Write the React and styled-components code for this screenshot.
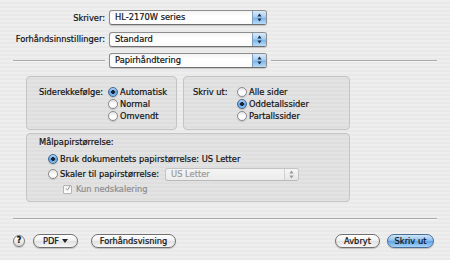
import React from 'react'
import styled, { createGlobalStyle } from 'styled-components'

const GlobalStyle = createGlobalStyle`
  html, body {
    margin:0;
    padding:0;
    background:#ececec;
  }
  body{
    font-family:"DejaVu Sans", "Liberation Sans", sans-serif;
    font-size:8.3px;
    color:#111;
    -webkit-text-stroke:0.2px currentColor;
  }
`

const Arrows = ({ color = '#1d2f4a' }) => (
  <svg width="5" height="9" viewBox="0 0 5 9">
    <path d="M2.5 0.5 L4.6 3.4 L0.4 3.4 Z" fill={color} />
    <path d="M2.5 8.5 L4.6 5.6 L0.4 5.6 Z" fill={color} />
  </svg>
)

const PopUp = ({ value, disabled }) => (
  <Select disabled={disabled}>
    <SelectText>{value}</SelectText>
    <Stepper disabled={disabled}>
      <Arrows color={disabled ? '#9a9a9a' : '#1d2f4a'} />
    </Stepper>
  </Select>
)

const Option = ({ checked, children }) => (
  <OptionRow>
    <Radio checked={checked} />
    <span>{children}</span>
  </OptionRow>
)

const App = () => {
  return (
    <Window>
      <GlobalStyle />
      <FormGrid>
        <FieldLabel>Skriver:</FieldLabel>
        <PopUp value="HL-2170W series" />
        <span />
        <FieldLabel>Forhåndsinnstillinger:</FieldLabel>
        <PopUp value="Standard" />
        <span />
        <Rule />
        <PopUp value="Papirhåndtering" />
        <Rule />
      </FormGrid>

      <Groups>
        <GroupBox>
          <GroupRow labelWidth={69} pad={12}>
            <GroupLabel>Siderekkefølge:</GroupLabel>
            <OptionList>
              <Option checked>Automatisk</Option>
              <Option>Normal</Option>
              <Option>Omvendt</Option>
            </OptionList>
          </GroupRow>
        </GroupBox>
        <GroupBox>
          <GroupRow labelWidth={44} pad={9}>
            <GroupLabel>Skriv ut:</GroupLabel>
            <OptionList>
              <Option>Alle sider</Option>
              <Option checked>Oddetallssider</Option>
              <Option>Partallssider</Option>
            </OptionList>
          </GroupRow>
        </GroupBox>
        <WideBox>
          <GroupLabel>Målpapirstørrelse:</GroupLabel>
          <SizeList>
            <SizeRow>
              <Radio checked />
              <span>Bruk dokumentets papirstørrelse: US Letter</span>
            </SizeRow>
            <SizeRow>
              <Radio />
              <span>Skaler til papirstørrelse:</span>
              <SmallSelect>
                <PopUp value="US Letter" disabled />
              </SmallSelect>
            </SizeRow>
            <CheckRow>
              <CheckBox>
                <svg width="9" height="9" viewBox="0 0 9 9">
                  <path d="M1.8 4.6 L3.6 7 L7.6 0.6" stroke="#8f8f8f" strokeWidth="1.4" fill="none" />
                </svg>
              </CheckBox>
              <span>Kun nedskalering</span>
            </CheckRow>
          </SizeList>
        </WideBox>
      </Groups>

      <Divider />

      <Footer>
        <HelpButton>?</HelpButton>
        <PushButton width={45}>
          PDF
          <svg width="6" height="4" viewBox="0 0 6 4">
            <path d="M0 0 L6 0 L3 4 Z" fill="#222" />
          </svg>
        </PushButton>
        <PushButton width={85} gapLeft={13}>Forhåndsvisning</PushButton>
        <Spacer />
        <PushButton width={45}>Avbryt</PushButton>
        <PushButton width={47} gapLeft={7} primary>Skriv ut</PushButton>
      </Footer>
    </Window>
  )
}

const Window = styled.div`
  width:450px;
  height:260px;
  box-sizing:border-box;
  padding:10px 13px 0 13px;
  background:repeating-linear-gradient(to bottom, #eeeeee 0px, #eeeeee 2px, #e9e9e9 2px, #e9e9e9 4px);
  overflow:hidden;
`

const FormGrid = styled.div`
  display:grid;
  grid-template-columns:92px 158px 1fr;
  grid-auto-rows:15px;
  column-gap:4px;
  row-gap:6.5px;
  align-items:center;
`

const FieldLabel = styled.div`
  text-align:right;
  white-space:nowrap;
`

const Rule = styled.div`
  height:1px;
  background:#a9a9a9;
  box-shadow:0 1px 0 #f6f6f6;
`

const Select = styled.div`
  height:15px;
  box-sizing:border-box;
  display:flex;
  align-items:stretch;
  border:1px solid ${p => p.disabled ? '#c4c4c4' : '#8d8d8d'};
  border-bottom-color:${p => p.disabled ? '#b8b8b8' : '#6f6f6f'};
  border-radius:3px;
  background:${p => p.disabled ? 'linear-gradient(#f4f4f4, #ececec)' : 'linear-gradient(#f3f3f3, #ffffff 40%, #fbfbfb)'};
  box-shadow:${p => p.disabled ? 'none' : '0 1px 1px rgba(0,0,0,0.18)'};
  overflow:hidden;
`

const SelectText = styled.div`
  flex:1;
  padding-left:5px;
  line-height:13px;
  white-space:nowrap;
  overflow:hidden;
`

const Stepper = styled.div`
  width:13px;
  display:flex;
  align-items:center;
  justify-content:center;
  border-left:1px solid ${p => p.disabled ? '#d0d0d0' : '#7f9bbd'};
  background:${p => p.disabled ? 'linear-gradient(#f6f6f6, #e6e6e6)' : 'linear-gradient(#d8eafa, #a9cff2 45%, #7cb6ea 55%, #b9dcf8)'};
`

const Groups = styled.div`
  width:324px;
  margin:8px 0 0 13px;
  display:grid;
  grid-template-columns:151px 167px;
  column-gap:6px;
  row-gap:3px;
`

const GroupBox = styled.div`
  height:54px;
  box-sizing:border-box;
  border:1px solid #c4c4c4;
  border-radius:4px;
  background:rgba(0,0,0,0.045);
`

const WideBox = styled(GroupBox)`
  grid-column:1 / span 2;
  height:69px;
  padding:2px 0 0 12px;
`

const GroupRow = styled.div`
  display:grid;
  grid-template-columns:${p => p.labelWidth}px auto;
  padding:9px 0 0 ${p => p.pad}px;
`

const GroupLabel = styled.div`
  line-height:12px;
  white-space:nowrap;
`

const OptionList = styled.div`
  display:flex;
  flex-direction:column;
`

const OptionRow = styled.div`
  height:12px;
  display:flex;
  align-items:center;
  gap:2px;
  white-space:nowrap;
`

const Radio = styled.span`
  width:10px;
  height:10px;
  box-sizing:border-box;
  flex:none;
  border-radius:50%;
  border:1px solid ${p => p.checked ? '#44668f' : '#8a8a8a'};
  background:${p => p.checked
    ? 'radial-gradient(circle at 50% 50%, #16263a 0, #16263a 1.6px, transparent 2.2px), linear-gradient(#b7d7f4, #5d9ee0 55%, #8cc2f0)'
    : 'linear-gradient(#e4e4e4, #ffffff 60%, #f4f4f4)'};
  box-shadow:0 1px 1px rgba(0,0,0,0.15);
`

const SizeList = styled.div`
  display:flex;
  flex-direction:column;
  gap:1px;
  margin:4px 0 0 9px;
`

const SizeRow = styled.div`
  height:14px;
  display:flex;
  align-items:center;
  gap:2px;
  white-space:nowrap;
`

const SmallSelect = styled.div`
  width:134px;
  margin-left:4px;
  color:#9a9a9a;

  & > div{
    height:13px;
  }
  & > div > div:first-child{
    line-height:11px;
  }
`

const CheckRow = styled.div`
  height:14px;
  display:flex;
  align-items:center;
  gap:4px;
  padding-left:15px;
  color:#8e8e8e;
`

const CheckBox = styled.span`
  width:9px;
  height:9px;
  box-sizing:border-box;
  border:1px solid #b4b4b4;
  border-radius:1px;
  background:linear-gradient(#f2f2f2, #fdfdfd);
  display:flex;
  align-items:center;
  justify-content:center;
  overflow:visible;

  svg{
    margin-top:-2px;
    margin-left:1px;
  }
`

const Divider = styled.div`
  height:1px;
  margin-top:16px;
  background:#a9a9a9;
  box-shadow:0 1px 0 #f6f6f6;
`

const Footer = styled.div`
  display:flex;
  align-items:center;
  margin-top:15px;
  padding-right:3px;
`

const HelpButton = styled.div`
  width:12px;
  height:12px;
  box-sizing:border-box;
  border-radius:50%;
  border:1px solid #7d7d7d;
  background:linear-gradient(#ffffff, #dcdcdc);
  box-shadow:0 1px 1px rgba(0,0,0,0.2);
  font-size:8px;
  font-weight:bold;
  line-height:10px;
  text-align:center;
  margin-right:8px;
`

const PushButton = styled.div`
  width:${p => p.width}px;
  height:14px;
  box-sizing:border-box;
  margin-left:${p => p.gapLeft || 0}px;
  display:flex;
  align-items:center;
  justify-content:center;
  gap:3px;
  border-radius:7px;
  border:1px solid ${p => p.primary ? '#4d6f96' : '#707070'};
  background:${p => p.primary
    ? 'linear-gradient(#cfe6fb, #8cc0ef 45%, #5fa3e6 55%, #a8d6fb)'
    : 'linear-gradient(#ffffff, #f1f1f1 45%, #e1e1e1 55%, #f7f7f7)'};
  box-shadow:0 1px 1px rgba(0,0,0,0.2);
  white-space:nowrap;
`

const Spacer = styled.div`
  flex:1;
`

export default App
